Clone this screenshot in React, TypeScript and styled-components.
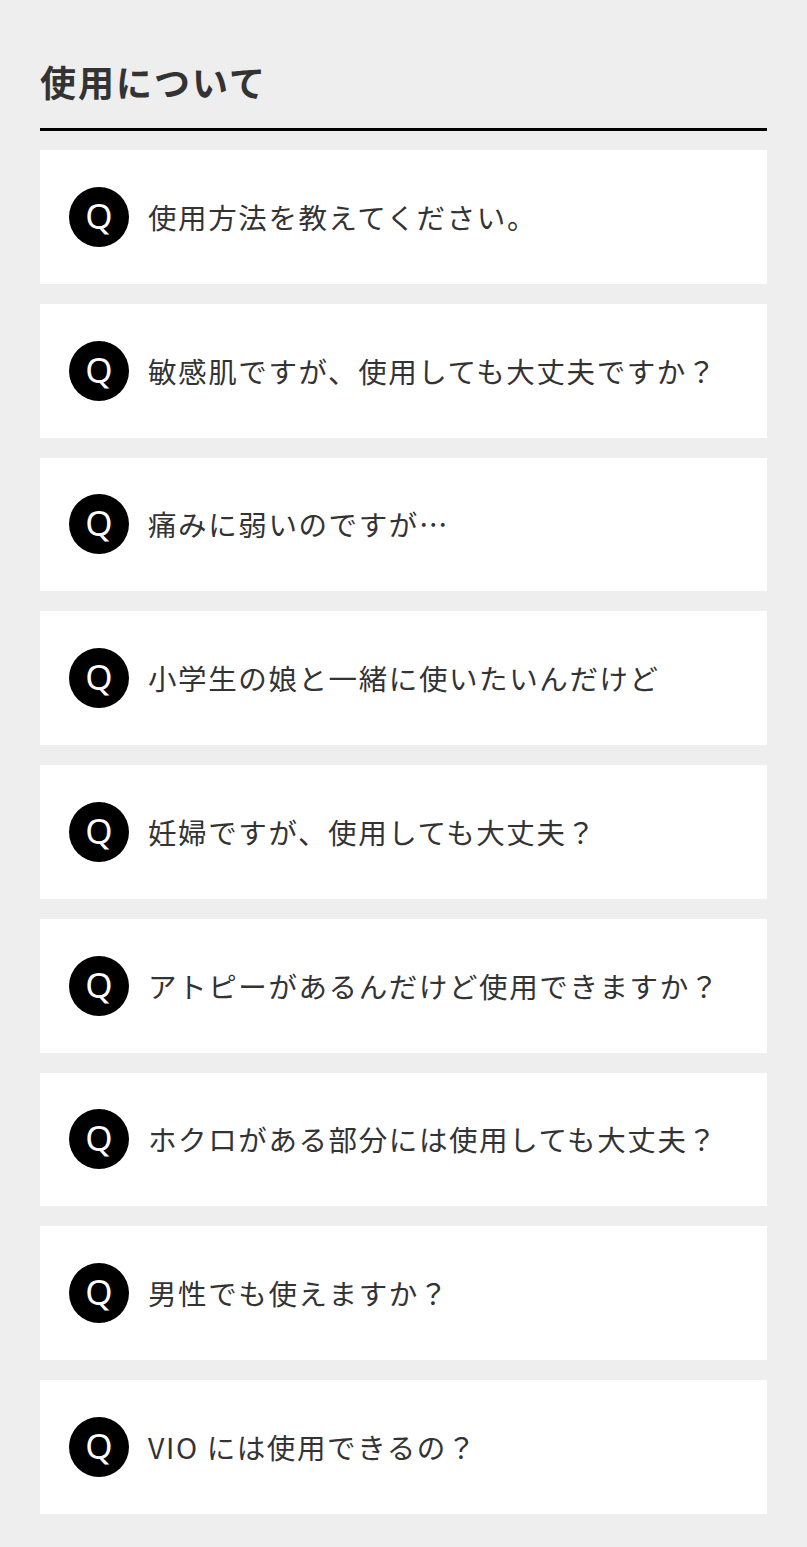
import React from "react";
import styled, { createGlobalStyle } from "styled-components";

const GlobalStyle = createGlobalStyle`
  html, body {
    margin: 0;
    padding: 0;
    background: #eeeeee;
  }
  body {
    font-family: "Noto Sans CJK JP", "Noto Sans", sans-serif;
    color: #333333;
  }
`;

const Page = styled.main`
  padding: 54px 40px 33px;
`;

const Heading = styled.h2`
  margin: 0;
  padding-bottom: 20px;
  border-bottom: 3px solid #000;
  font-size: 36px;
  line-height: 54px;
  font-weight: 700;
  letter-spacing: 2px;
  color: #333;
`;

const List = styled.ul`
  list-style: none;
  margin: 19px 0 0;
  padding: 0;
  display: flex;
  flex-direction: column;
  gap: 20px;
`;

const Card = styled.li`
  background: #fff;
  height: 133.75px;
  box-sizing: border-box;
  padding: 0 29px;
  display: flex;
  align-items: center;
  gap: 19px;
`;

const QBadge = styled.span`
  flex: none;
  width: 60px;
  height: 60px;
  border-radius: 50%;
  background: #000;
  color: #fff;
  display: flex;
  align-items: center;
  justify-content: center;
  font-family: "Noto Sans", "DejaVu Sans", sans-serif;
  font-size: 35px;
  font-weight: 400;
  line-height: 1;
  padding-bottom: 3px;
  box-sizing: border-box;
`;

const Question = styled.span`
  font-size: 28.5px;
  line-height: 1.4;
  letter-spacing: 1.6px;
  color: #333;
`;

const questions = [
  "使用方法を教えてください。",
  "敏感肌ですが、使用しても大丈夫ですか？",
  "痛みに弱いのですが…",
  "小学生の娘と一緒に使いたいんだけど",
  "妊婦ですが、使用しても大丈夫？",
  "アトピーがあるんだけど使用できますか？",
  "ホクロがある部分には使用しても大丈夫？",
  "男性でも使えますか？",
  "VIO には使用できるの？",
];

export default function App() {
  return (
    <>
      <GlobalStyle />
      <Page>
        <Heading>使用について</Heading>
        <List>
          {questions.map((q) => (
            <Card key={q}>
              <QBadge>Q</QBadge>
              <Question>{q}</Question>
            </Card>
          ))}
        </List>
      </Page>
    </>
  );
}
